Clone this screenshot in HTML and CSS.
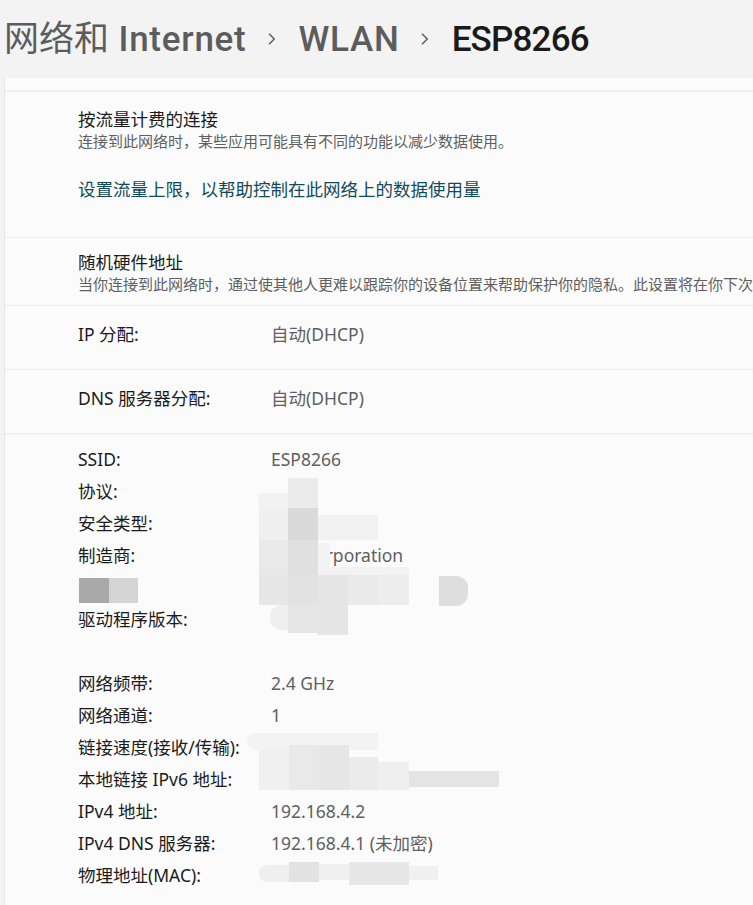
FILE: index.html
```html
<!DOCTYPE html>
<html lang="zh-CN">
<head>
<meta charset="utf-8">
<title>ESP8266</title>
<link rel="stylesheet" href="styles.css">
</head>
<body>
<header class="header">
  <span class="crumb"><span class="cjk">网络和</span> Internet</span>
  <svg class="chev" width="8" height="12" viewBox="0 0 8 12"><path d="M1.5 1.2 L6.3 6 L1.5 10.8" fill="none" stroke="#616161" stroke-width="1.6" stroke-linecap="round" stroke-linejoin="round"/></svg>
  <span class="crumb">WLAN</span>
  <svg class="chev" width="8" height="12" viewBox="0 0 8 12"><path d="M1.5 1.2 L6.3 6 L1.5 10.8" fill="none" stroke="#616161" stroke-width="1.6" stroke-linecap="round" stroke-linejoin="round"/></svg>
  <span class="crumb current">ESP8266</span>
</header>

<main class="card">
  <section class="sec top"></section>

  <section class="sec metered gap">
    <div class="title">按流量计费的连接</div>
    <div class="desc">连接到此网络时，某些应用可能具有不同的功能以减少数据使用。</div>
    <a class="link">设置流量上限，以帮助控制在此网络上的数据使用量</a>
  </section>

  <section class="sec random line">
    <div class="title">随机硬件地址</div>
    <div class="desc nowrap">当你连接到此网络时，通过使其他人更难以跟踪你的设备位置来帮助保护你的隐私。此设置将在你下次</div>
  </section>

  <section class="sec single line">
    <div class="kv"><span class="k">IP 分配:</span><span class="v">自动(DHCP)</span></div>
  </section>

  <section class="sec single line">
    <div class="kv"><span class="k">DNS 服务器分配:</span><span class="v">自动(DHCP)</span></div>
  </section>

  <section class="sec details gap">
    <div class="grid">
      <span class="k">SSID:</span><span class="v">ESP8266</span>
      <span class="k">协议:</span><span class="v"></span>
      <span class="k">安全类型:</span><span class="v"></span>
      <span class="k">制造商:</span><span class="v corp">Corporation</span>
      <span class="k"></span><span class="v"></span>
      <span class="k">驱动程序版本:</span><span class="v"></span>
      <span class="k"></span><span class="v"></span>
      <span class="k">网络频带:</span><span class="v">2.4 GHz</span>
      <span class="k">网络通道:</span><span class="v">1</span>
      <span class="k">链接速度(接收/传输):</span><span class="v"></span>
      <span class="k">本地链接 IPv6 地址:</span><span class="v"></span>
      <span class="k">IPv4 地址:</span><span class="v">192.168.4.2</span>
      <span class="k">IPv4 DNS 服务器:</span><span class="v">192.168.4.1 (未加密)</span>
      <span class="k">物理地址(MAC):</span><span class="v"></span>
    </div>
  </section>
</main>

<div class="mosaic" aria-hidden="true">
  <i style="left:79px;top:578px;width:30px;height:25px;background:#a9a9a9"></i>
  <i style="left:109px;top:578px;width:29px;height:25px;background:#d5d5d5"></i>

  <i style="left:259px;top:493px;width:29px;height:17px;background:#f2f2f2"></i>
  <i style="left:288px;top:478px;width:30px;height:30px;background:#ebebeb"></i>
  <i style="left:259px;top:510px;width:29px;height:30px;background:#efefef"></i>
  <i style="left:288px;top:508px;width:30px;height:32px;background:#dadada"></i>
  <i style="left:318px;top:515px;width:60px;height:25px;background:#f1f1f1"></i>
  <i style="left:259px;top:540px;width:29px;height:35px;background:#e9e9e9"></i>
  <i style="left:288px;top:540px;width:30px;height:35px;background:#e0e0e0"></i>
  <i style="left:318px;top:543px;width:12px;height:24px;background:#f3f3f3"></i>
  <i style="left:318px;top:567px;width:91px;height:8px;background:#f2f2f2"></i>
  <i style="left:259px;top:575px;width:29px;height:30px;background:#e6e6e6"></i>
  <i style="left:288px;top:575px;width:30px;height:30px;background:#e2e2e2"></i>
  <i style="left:318px;top:575px;width:30px;height:30px;background:#e5e5e5"></i>
  <i style="left:348px;top:575px;width:30px;height:30px;background:#eaeaea"></i>
  <i style="left:378px;top:575px;width:31px;height:30px;background:#ededed"></i>
  <i style="left:439px;top:576px;width:29px;height:30px;background:#dedede;border-radius:0 12px 12px 0"></i>
  <i style="left:270px;top:605px;width:18px;height:25px;background:#efefef;border-radius:12px 0 0 12px"></i>
  <i style="left:288px;top:605px;width:30px;height:28px;background:#e6e6e6"></i>
  <i style="left:318px;top:605px;width:30px;height:30px;background:#e5e5e5"></i>

  <i style="left:247px;top:733px;width:131px;height:17px;background:#f3f3f3;border-radius:9px 0 0 9px"></i>
  <i style="left:259px;top:750px;width:30px;height:40px;background:#f0f0f0"></i>
  <i style="left:289px;top:745px;width:30px;height:45px;background:#e9e9e9"></i>
  <i style="left:319px;top:745px;width:30px;height:45px;background:#e6e6e6"></i>
  <i style="left:349px;top:757px;width:29px;height:33px;background:#ebebeb"></i>
  <i style="left:378px;top:762px;width:31px;height:28px;background:#efefef"></i>
  <i style="left:409px;top:771px;width:90px;height:16px;background:#e4e4e4"></i>

  <i style="left:259px;top:865px;width:30px;height:17px;background:#efefef;border-radius:8px 0 0 8px"></i>
  <i style="left:289px;top:862px;width:30px;height:20px;background:#e2e2e2"></i>
  <i style="left:319px;top:864px;width:30px;height:16px;background:#f0f0f0"></i>
  <i style="left:349px;top:862px;width:60px;height:23px;background:#e7e7e7"></i>
  <i style="left:409px;top:866px;width:29px;height:14px;background:#f0f0f0"></i>
</div>
</body>
</html>
```

FILE: styles.css
```css
html, body {
  margin: 0;
  padding: 0;
}

body {
  position: relative;
  width: 753px;
  height: 905px;
  overflow: hidden;
  background: #f3f3f3;
  font-family: "Noto Sans", "Noto Sans CJK SC", sans-serif;
  color: #1b1b1b;
}

.header {
  height: 78px;
  box-sizing: border-box;
  padding: 12px 0 0 4px;
  display: flex;
  align-items: baseline;
}

.crumb {
  font-family: Roboto, "Noto Sans CJK SC", sans-serif;
  font-size: 35px;
  font-weight: 500;
  line-height: 48px;
  letter-spacing: 0.75px;
  color: #5c5c5c;
  white-space: nowrap;
}

.crumb .cjk {
  font-family: "Noto Sans CJK SC", sans-serif;
  font-weight: 400;
  letter-spacing: 0;
}

.crumb.current {
  color: #1a1a1a;
  letter-spacing: -0.8px;
}

.chev {
  flex: none;
  align-self: flex-start;
  margin: 21px 23px 0 21px;
}

.card {
  margin-left: 4px;
  margin-right: -30px;
  background: #fbfbfb;
  border-left: 1px solid #e5e5e5;
}

.sec {
  padding-left: 73px;
}

.sec.gap {
  border-top: 2px solid #f1f1f1;
}

.sec.line {
  border-top: 1px solid #ededed;
}

.top {
  height: 12px;
}

.title {
  font-size: 17.5px;
  line-height: 22px;
}

.desc {
  margin-top: 1px;
  font-size: 15px;
  line-height: 20px;
  color: #5f5f5f;
}

.nowrap {
  white-space: nowrap;
}

.metered {
  padding-top: 16px;
  padding-bottom: 37px;
}

.link {
  display: block;
  margin-top: 27px;
  font-size: 17.5px;
  line-height: 22px;
  color: #114a5b;
}

.random {
  padding-top: 13px;
  padding-bottom: 11px;
}

.single {
  padding-top: 16px;
  padding-bottom: 23px;
}

.kv {
  display: grid;
  grid-template-columns: 193px 1fr;
  font-size: 17.5px;
  line-height: 24px;
}

.k {
  color: #1b1b1b;
  white-space: nowrap;
}

.v {
  color: #5f5f5f;
  white-space: nowrap;
}

.details {
  padding-top: 8px;
  padding-bottom: 40px;
}

.grid {
  display: grid;
  grid-template-columns: 193px 1fr;
  grid-auto-rows: 32px;
  align-items: center;
  font-size: 17.5px;
  line-height: 24px;
}

.corp {
  padding-left: 33px;
}

.mosaic i {
  position: absolute;
  display: block;
}
```
